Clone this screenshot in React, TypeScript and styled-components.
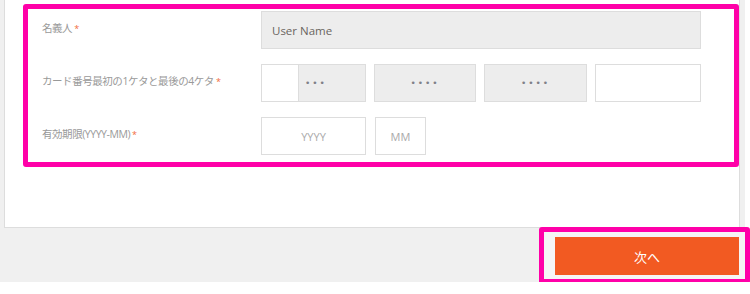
import React from 'react';
import styled, { createGlobalStyle } from 'styled-components';

const GlobalStyle = createGlobalStyle`
  html, body {
    margin: 0;
    padding: 0;
    background: #ffffff;
  }

  body {
    font-family: 'Open Sans', 'Noto Sans CJK JP', sans-serif;
  }
`;

const Page = styled('div')`
  width: 745px;
  height: 282px;
  background-color: #f0f0f0;
`;

const Card = styled('section')`
  box-sizing: border-box;
  margin-left: 4px;
  width: 736px;
  height: 228px;
  padding: 4px 0 0 18px;
  background-color: #ffffff;
  border: 1px solid #dddddd;
  border-top: none;
`;

const Highlight = styled('div')`
  box-sizing: border-box;
  width: 716px;
  border: 5px solid #ff00a8;
  border-radius: 3px;
  padding: 2px 33px 7px 14px;
`;

const FormGrid = styled('div')`
  display: grid;
  grid-template-columns: 219px 1fr;
  row-gap: 15px;
  align-items: center;
`;

const Label = styled('label')`
  font-size: 10.5px;
  letter-spacing: -0.45px;
  color: #999999;
  margin-top: -5px;
`;

const Required = styled('span')`
  color: #f26a3c;
  font-size: 9px;
  margin-left: 2px;
`;

const Field = styled('div')<{ $disabled?: boolean; $width?: number; $align?: string }>`
  box-sizing: border-box;
  height: 38px;
  width: ${(p) => (p.$width ? `${p.$width}px` : 'auto')};
  display: flex;
  align-items: center;
  justify-content: ${(p) => p.$align || 'center'};
  padding: 0 10px;
  border: 1px solid #dddddd;
  background-color: ${(p) => (p.$disabled ? '#ededed' : '#ffffff')};
  font-size: 11px;
  color: #aaaaaa;
`;

const UserName = styled('span')`
  font-size: 11.5px;
  color: #6a6560;
`;

const CardRow = styled('div')`
  display: grid;
  grid-template-columns: 105px 102px 103px 106px;
  gap: 8px;
  justify-content: space-between;
`;

const SplitField = styled('div')`
  box-sizing: border-box;
  height: 38px;
  display: flex;
  border: 1px solid #dddddd;
`;

const DigitCell = styled('div')`
  width: 36px;
  background-color: #ffffff;
  border-right: 1px solid #dddddd;
`;

const MaskCell = styled('div')`
  flex: 1;
  display: flex;
  align-items: center;
  padding-left: 6px;
  background-color: #ededed;
`;

const Dots = styled('span')`
  font-family: 'DejaVu Sans', sans-serif;
  font-size: 9px;
  letter-spacing: 2px;
  color: #808088;
`;

const DateRow = styled('div')`
  display: flex;
  gap: 9px;
`;

const Footer = styled('div')`
  display: flex;
  justify-content: flex-end;
  margin-top: -1px;
  margin-right: -5px;
`;

const ButtonFrame = styled('div')`
  box-sizing: border-box;
  width: 211px;
  padding: 5px 6px 4px 11px;
  border: 5px solid #ff00a8;
  border-radius: 3px;
  background-color: #f5f5f5;
`;

const NextButton = styled('button')`
  display: block;
  width: 184px;
  height: 38px;
  border: none;
  background-color: #f25a22;
  color: #ffffff;
  font-family: 'Noto Sans CJK JP', sans-serif;
  font-size: 13px;
  cursor: pointer;
`;

export default function App() {
  return (
    <>
      <GlobalStyle />
      <Page>
        <Card>
          <Highlight>
            <FormGrid>
              <Label>
                名義人<Required>*</Required>
              </Label>
              <Field $disabled $align="flex-start">
                <UserName>User Name</UserName>
              </Field>

              <Label>
                カード番号最初の1ケタと最後の4ケタ<Required>*</Required>
              </Label>
              <CardRow>
                <SplitField>
                  <DigitCell />
                  <MaskCell>
                    <Dots>•••</Dots>
                  </MaskCell>
                </SplitField>
                <Field $disabled>
                  <Dots>••••</Dots>
                </Field>
                <Field $disabled>
                  <Dots>••••</Dots>
                </Field>
                <Field />
              </CardRow>

              <Label>
                有効期限(YYYY-MM)<Required>*</Required>
              </Label>
              <DateRow>
                <Field $width={105}>YYYY</Field>
                <Field $width={51}>MM</Field>
              </DateRow>
            </FormGrid>
          </Highlight>
        </Card>
        <Footer>
          <ButtonFrame>
            <NextButton>次へ</NextButton>
          </ButtonFrame>
        </Footer>
      </Page>
    </>
  );
}
